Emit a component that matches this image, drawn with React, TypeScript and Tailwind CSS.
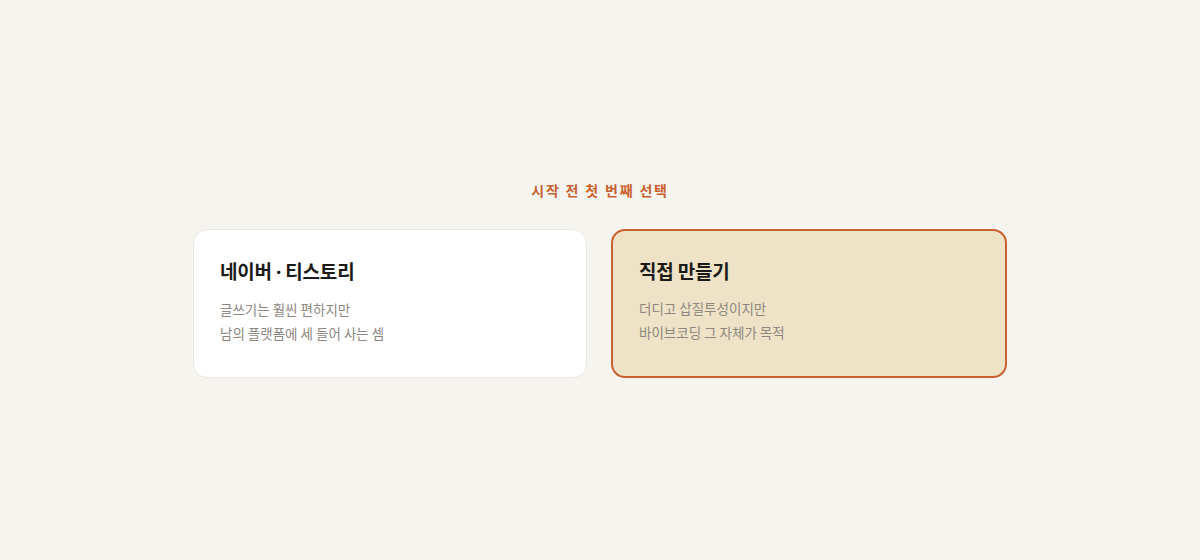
import React from "react";

export default function App() {
  return (
    <div
      className="w-full h-[560px] bg-[#f6f4ef] flex flex-col items-center justify-center"
      style={{ fontFamily: '"Noto Sans CJK KR", "Noto Sans", sans-serif' }}
    >
      <div className="text-[14px] font-bold tracking-[0.13em] text-[#c8612f] leading-5 mt-[-2px]">
        시작 전 첫 번째 선택
      </div>
      <div className="mt-[29px] grid grid-cols-[394px_396px] gap-[24px] w-[814px]">
        <div className="h-[149px] rounded-[14px] bg-white border border-[#ebe7e1] px-[26px] pt-[27px]">
          <div className="text-[19px] font-bold text-[#1c1a17] leading-[28px] tracking-[-0.01em]">
            네이버 <span style={{ fontFamily: '"Noto Sans", sans-serif' }}>·</span> 티스토리
          </div>
          <div className="mt-[11px] text-[13.5px] text-[#8d8780] leading-[24px]">
            <div>글쓰기는 훨씬 편하지만</div>
            <div>남의 플랫폼에 세 들어 사는 셈</div>
          </div>
        </div>
        <div className="h-[149px] rounded-[14px] bg-[#efe3c7] border-2 border-[#c8612f] px-[26px] pt-[26px]">
          <div className="text-[19px] font-bold text-[#1c1a17] leading-[28px] tracking-[-0.01em]">
            직접 만들기
          </div>
          <div className="mt-[11px] text-[13.5px] text-[#8d8780] leading-[24px]">
            <div>더디고 삽질투성이지만</div>
            <div>바이브코딩 그 자체가 목적</div>
          </div>
        </div>
      </div>
    </div>
  );
}
